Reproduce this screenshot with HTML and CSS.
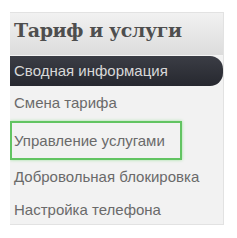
FILE: index.html
```html
<!DOCTYPE html>
<html>
    <head>
        <link rel="stylesheet" href="styles.css">
    </head>
    <body>
        <div class="panel">
            <div class="panel-header">
                <h2>Тариф и услуги</h2>
            </div>
            <ul class="menu">
                <li class="menu-item active">Сводная информация</li>
                <li class="menu-item">Смена тарифа</li>
                <li class="menu-item focused">Управление услугами</li>
                <li class="menu-item">Добровольная блокировка</li>
                <li class="menu-item">Настройка телефона</li>
            </ul>
        </div>
    </body>
</html>
```

FILE: styles.css
```css
* {
    box-sizing: border-box;
}

body {
    margin: 0;
    background-color: white;
    font-family: "Liberation Sans", Arial, sans-serif;
}

.panel {
    margin: 12px 0 0 10px;
    width: 214px;
    height: 213px;
    background-color: #f2f2f2;
    border: 1px solid #e2e2e2;
    border-left: none;
    overflow: hidden;
}

.panel-header {
    height: 43px;
    background: linear-gradient(#f1f1f1, #dcdcdc);
    border-bottom: 1px solid #f4f4f4;
    padding: 6px 0 0 4px;
}

.panel-header h2 {
    margin: 0;
    font-family: "DejaVu Serif", serif;
    font-size: 19px;
    line-height: 22px;
    font-weight: bold;
    letter-spacing: -0.4px;
    color: #4e4e4e;
}

.menu {
    list-style: none;
    margin: 0;
    padding: 0;
}

.menu-item {
    height: 33px;
    line-height: 33px;
    padding-left: 4px;
    font-size: 15px;
    color: #6a6a6a;
}

.menu-item.active {
    height: 30px;
    line-height: 30px;
    width: 213px;
    background: linear-gradient(#3b3d45, #26282f);
    color: #d8d8d8;
    border-radius: 0 13px 13px 0;
}

.menu-item.focused {
    margin-top: 2px;
    width: 172px;
    height: 39px;
    line-height: 35px;
    border: 2px solid #62c462;
    padding-left: 2px;
    box-shadow: 0 0 3px #9fe09f;
}
```
